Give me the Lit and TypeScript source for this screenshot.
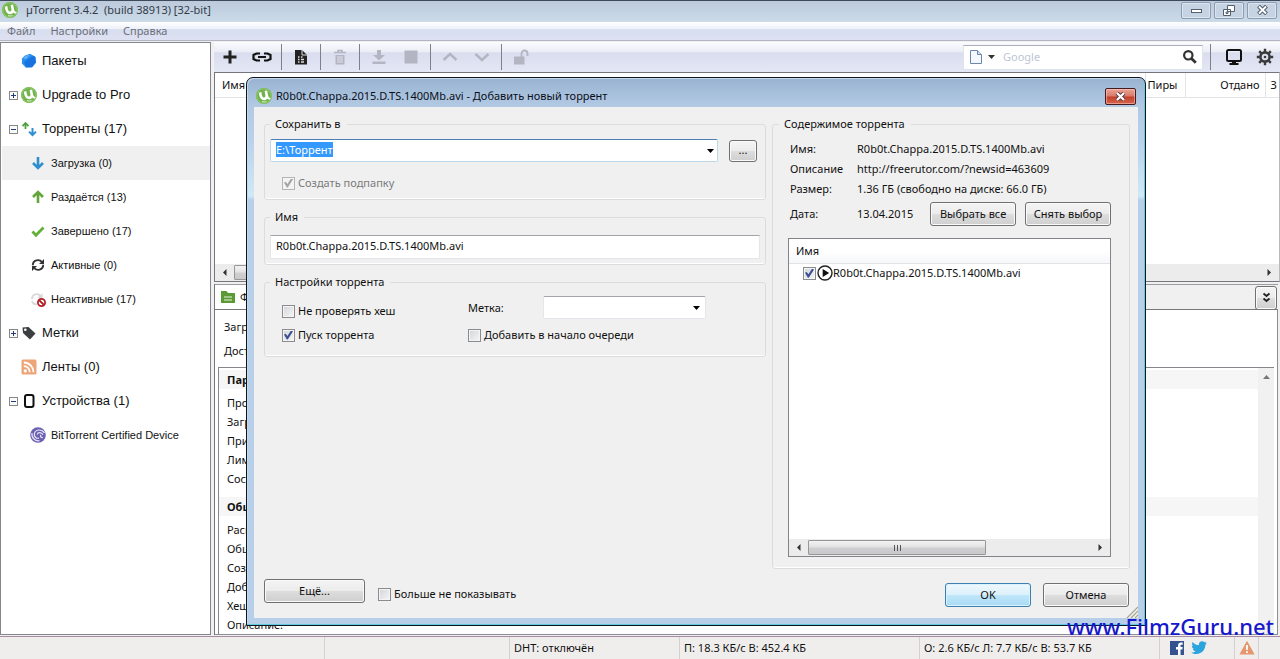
import { LitElement, html, css, svg, nothing } from "lit";
import { customElement, query } from "lit/decorators.js";
import { classMap } from "lit/directives/class-map.js";

const logo = svg`
  <circle cx="8" cy="8" r="8" fill="#72b34e"/>
  <circle cx="8" cy="8" r="7.2" fill="none" stroke="#8ecb68" stroke-width="1"/>
  <path d="M2.800 4.800l2.600-.9c.2 3.600 1 5.500 2.600 5.500 1.300 0 1.700-1 1.300-3l-.7-3.400 2.500-.6.9 4.700c.4 2.100 1 2.900 2.800 3.100-.6 1.500-2.700 1.600-3.600.3-.7 1.300-1.600 1.800-3.100 1.700-3.200-.1-4.800-2.900-5.300-7.400z" fill="#fff"/>
  <path d="M6 13.600c1.500.5 3.200.4 4.500-.1" stroke="#dff0d4" stroke-width="1" fill="none"/>`;

const icon = (body: unknown, w = 16, h = w) =>
  html`<svg class="ico" width=${w} height=${h} viewBox="0 0 ${w} ${h}" aria-hidden="true">${body}</svg>`;

const icons = {
  packets: svg`<path d="M4 2.500L9 .8l5 2.700 1.200 6L11 14.500l-6 .3L.9 10.500 1 5.500z" fill="#2a8df0"/><path d="M3 9l9-6 2.500 1 .2 5.500L11 14H5z" fill="#1872e0"/><path d="M2 5.500L4.500 3 9 1.500 5 6z" fill="#5cb4fb"/>`,
  torrents: svg`<path d="M4.500 8V2.500M1.500 5.200L4.500 2l3 3.200" fill="none" stroke="#4da23e" stroke-width="1.800"/><path d="M11.500 7v6.500M8 10.600l3.500 3.400 3.500-3.400" fill="none" stroke="#2f8fce" stroke-width="2"/>`,
  down: svg`<path d="M8 2v11M3 8l5 5 5-5" fill="none" stroke="#2f8fce" stroke-width="2.600"/>`,
  up: svg`<path d="M8 14V3M3 8l5-5 5 5" fill="none" stroke="#62a63a" stroke-width="2.600"/>`,
  done: svg`<path d="M2.500 8.500L6 12.200 13.500 4.500" fill="none" stroke="#62b03a" stroke-width="2.800"/>`,
  active: svg`<path d="M2.800 8.200c0-5.200 6.500-6.700 9.300-3M13.200 7.800c0 5.200-6.500 6.700-9.300 3" fill="none" stroke="#333" stroke-width="1.900"/><path d="M14 2v5H9zM2 14V9h5z" fill="#333"/>`,
  inactive: svg`<path d="M2 8c0-5 6-6.500 8.500-3M2 10c1 3 3 3.600 5 3" fill="none" stroke="#d9d9d9" stroke-width="1.800"/><path d="M12.500 2v5h-5z" fill="#d9d9d9"/><circle cx="11.500" cy="11.500" r="3.600" fill="#fff" stroke="#b3202a" stroke-width="1.800"/><path d="M9 9l5 5" stroke="#b3202a" stroke-width="1.800"/>`,
  labels: svg`<path d="M1.500 2.500l6-.6 7 6.600-5.500 6-7-6.500z" fill="#3b3f42"/><circle cx="4.300" cy="4.800" r="1.300" fill="#fff"/>`,
  feeds: svg`<rect x=".5" y=".5" width="15" height="15" rx="1.500" fill="#eda577"/><circle cx="4.300" cy="11.900" r="1.600" fill="#fff"/><path d="M2.800 7.200a6 6 0 0 1 6 6M2.800 3.500a9.700 9.700 0 0 1 9.700 9.700" fill="none" stroke="#fff" stroke-width="1.800"/>`,
  devices: svg`<rect x="4" y="2" width="8.500" height="12" rx="2" fill="none" stroke="#111" stroke-width="2"/>`,
  bt: svg`<circle cx="8" cy="8" r="7.800" fill="#6a62b0"/><path d="M14.500 6C12 2 6 2 4.500 6.200 3.500 9.500 6.500 12 9 11M13 7.800C11.500 5 8 5 7.200 7.500M12.800 10.500c-2 .3-3-1.800-1.800-2.500M2 6c-.8 5 3.500 8.500 7.500 7.700" fill="none" stroke="#e6e3f6" stroke-width="1.200"/>`,
  plus: svg`<path d="M8 1.500v13M1.500 8h13" stroke="#222" stroke-width="3"/>`,
  link: svg`<path d="M9 4.500H5.500l-3 1.500v4l3 1.500H9M13 4.500h3.500l3 1.500v4l-3 1.500H13M7 8h8" fill="none" stroke="#111" stroke-width="2.200"/>`,
  file: svg`<path d="M2 1h7l5 5v9.500H2z" fill="#222"/><path d="M9 1v5h5" fill="none" stroke="#ddd"/><path d="M5 8h1.500M8 8h1.500M5 10.500h1.500M5 13h1.500M8 10.500h3M8 13h3" stroke="#ddd" stroke-width="1.500"/>`,
  trash: svg`<path d="M2 3.500h12M6 3V1.500h4V3" fill="none" stroke="#b4b5c2" stroke-width="1.600"/><path d="M3.500 6h9v9.500h-9z" fill="#b4b5c2"/><path d="M6 7v7M8 7v7M10 7v7" stroke="#dfe1ee"/>`,
  get: svg`<path d="M6 1h4v5h4L8 11.500 2 6h4zM1.500 12.500h13v2.500h-13z" fill="#b4b5c2"/>`,
  stop: svg`<path d="M1.500 1.500h13v13h-13z" fill="#b4b5c2"/>`,
  chevUp: svg`<path d="M1.500 11L8 5l6.500 6" fill="none" stroke="#b4b5c2" stroke-width="2.400"/>`,
  chevDown: svg`<path d="M1.500 5L8 11l6.500-6" fill="none" stroke="#b4b5c2" stroke-width="2.400"/>`,
  lock: svg`<path d="M1 7.500h10.500v8H1z" fill="#b4b5c2"/><path d="M8.500 8V4.500a3 3 0 0 1 6 0V7" fill="none" stroke="#b4b5c2" stroke-width="1.800"/>`,
  page: svg`<path d="M2.500 1.500h7l4 4v9h-11z" fill="#f4f8fd" stroke="#6d87ac"/><path d="M9.500 1.500v4h4" fill="#cfdcee" stroke="#6d87ac"/>`,
  search: svg`<circle cx="6.300" cy="6.300" r="4.200" fill="none" stroke="#333" stroke-width="2.200"/><path d="M9.500 9.500l4.300 4.300" stroke="#333" stroke-width="2.800"/>`,
  monitor: svg`<rect x="2" y="2" width="14" height="11" rx="1.500" fill="none" stroke="#111" stroke-width="2"/><path d="M7 13h4v2h2.500v2h-9v-2H7z" fill="#111"/>`,
  gear: svg`<circle cx="9" cy="9" r="4.600" fill="none" stroke="#3a3a3a" stroke-width="2.600"/><circle cx="9" cy="9" r="1.300" fill="#3a3a3a"/><path d="M9 .8v3M9 14.200v3M.8 9h3M14.200 9h3M3.200 3.200l2.100 2.100M12.700 12.700l2.100 2.100M3.200 14.800l2.100-2.100M12.700 5.300l2.100-2.100" stroke="#3a3a3a" stroke-width="2.400"/>`,
  folder: svg`<path d="M0 1h5.500l1.500 2h7v10H0z" fill="#5b9a34"/><path d="M3 7h8M3 10h8" stroke="#e6f2dd" stroke-width="1.200"/>`,
  play: svg`<circle cx="8" cy="8" r="7" fill="#fff" stroke="#222" stroke-width="1.400"/><path d="M5.700 3.900L12.200 8l-6.500 4.100z" fill="#111"/>`,
  facebook: svg`<path d="M1 1h14v14H1z" fill="#35548f"/><path d="M9 15V9.500H7V7h2V5.500C9 3.500 10.200 2.500 12 2.500h1.700v2.300h-1.200c-.8 0-1 .4-1 1V7h2.200l-.3 2.500h-1.900V15z" fill="#fff"/>`,
  twitter: svg`<path d="M16 3.500l-1.600 1.300C14.300 10.500 10 14 5.500 14 3.500 14 1.600 13.500.2 12.500c1.700.1 3.200-.3 4.400-1.300-1.300-.1-2.400-1-2.900-2.200h1.400C1.700 8.600.8 7.300.8 5.800l1.400.4C1 5 .7 3.300 1.500 1.900c1.600 1.900 3.700 3 6.400 3.200C7.500 2.700 9.200 1.200 11 1.200c1 0 1.900.4 2.500 1.100l2-.8-1.200 1.800z" fill="#2ba3dd"/>`,
  warning: svg`<path d="M8 .8l7.600 13.700H.4z" fill="#e5966c"/><path d="M8 5v5M8 11.300v1.800" stroke="#fff" stroke-width="1.800"/>`,
};

interface NavItem { text: string; icon: unknown; sub?: boolean; expand?: "+" | "-"; active?: boolean }

const nav: NavItem[] = [
  { text: "Пакеты", icon: icons.packets },
  { text: "Upgrade to Pro", icon: logo, expand: "+" },
  { text: "Торренты (17)", icon: icons.torrents, expand: "-" },
  { text: "Загрузка (0)", icon: icons.down, sub: true, active: true },
  { text: "Раздаётся (13)", icon: icons.up, sub: true },
  { text: "Завершено (17)", icon: icons.done, sub: true },
  { text: "Активные (0)", icon: icons.active, sub: true },
  { text: "Неактивные (17)", icon: icons.inactive, sub: true },
  { text: "Метки", icon: icons.labels, expand: "+" },
  { text: "Ленты (0)", icon: icons.feeds },
  { text: "Устройства (1)", icon: icons.devices, expand: "-" },
  { text: "BitTorrent Certified Device", icon: icons.bt, sub: true },
];

const tools: ([string, unknown, number, boolean] | null)[] = [
  ["Добавить торрент", icons.plus, 16, false],
  ["Добавить по ссылке", icons.link, 22, false],
  null,
  ["Создать торрент", icons.file, 16, false],
  null,
  ["Удалить", icons.trash, 16, true],
  null,
  ["Запустить", icons.get, 16, true],
  ["Остановить", icons.stop, 16, true],
  null,
  ["Вверх", icons.chevUp, 16, true],
  ["Вниз", icons.chevDown, 16, true],
  null,
  ["Доступ", icons.lock, 16, true],
];

const details = [
  { title: "Параметры", rows: ["Прошло:", "Загружено:", "Приём:", "Лимит:", "Состояние:"] },
  { title: "Общие", rows: ["Расположение:", "Общий размер:", "Создан:", "Добавлен:", "Хеш:", "Описание:"] },
];

@customElement("scroll-row")
class ScrollRow extends LitElement {
  static styles = css`
    :host { display: flex; align-items: center; height: 17px; background: #ececec; }
    svg { flex: none; width: 19px; height: 7px; }
    .track { flex: 1; display: flex; height: 100%; }
    .thumb {
      display: flex; align-items: center; justify-content: center; gap: 2px;
      width: 63%; box-sizing: border-box; height: 15px; margin-top: 1px;
      border: 1px solid #979797; border-radius: 1px;
      background: linear-gradient(#f3f3f3, #e2e2e2 48%, #cfcfd1 52%, #c9c9cb);
    }
    .thumb i { width: 1px; height: 6px; background: #555; }
  `;
  render() {
    return html`
      <svg viewBox="0 0 19 7"><path d="M11.500 0v7L8 3.500z" fill="#333"/></svg>
      <div class="track"><div class="thumb"><i></i><i></i><i></i></div></div>
      <svg viewBox="0 0 19 7"><path d="M7.500 0v7L11 3.500z" fill="#333"/></svg>`;
  }
}

@customElement("app-root")
class AppRoot extends LitElement {
  @query("#path") path!: HTMLInputElement;

  static styles = css`
    :host {
      display: flex; flex-direction: column; position: relative;
      min-height: 100vh; box-sizing: border-box; overflow: hidden;
      font: 11px/16px "Noto Sans", "Open Sans", sans-serif; color: #111;
      background: #f0f0f0; border-bottom: 2px solid #0c1118;
    }
    *, *::before, *::after { box-sizing: border-box; }
    button, input, select { font: inherit; color: inherit; margin: 0; padding: 0; }
    button { cursor: default; }
    a { color: inherit; text-decoration: none; }
    .ico { display: block; flex: none; }
    table { border-collapse: collapse; table-layout: fixed; width: 100%; }
    th, td { font-weight: 400; text-align: left; padding: 0; white-space: nowrap; }

    .titlebar {
      display: flex; align-items: center; gap: 8px; height: 22px; padding: 0 3px 3px 2px;
      border-top: 1px solid #3d4a5c; color: #333b48;
      background: linear-gradient(#bccadb, #cbdbe9);
    }
    .titlebar .name { flex: 1; white-space: pre; padding: 0; }
    .winbtns { display: flex; gap: 3px; }
    .winbtn {
      display: grid; place-items: center; width: 30px; height: 17px;
      border: 1px solid #8d9cb0; border-radius: 2px; background: #c5d3e2;
      box-shadow: inset 0 0 0 1px #dbe5ef;
    }

    .menu {
      display: flex; gap: 15px; height: 19px; padding: 0 7px; align-items: center;
      border-bottom: 1px solid #b3b6c2; color: #6c6f78;
      background: linear-gradient(#fff, #eef1f9 38%, #d6def0 42%, #dfe1f2);
    }
    .menu button { border: 0; background: none; }

    .body { flex: 1; display: grid; grid-template-columns: 211px minmax(0, 1fr); gap: 3px; padding-top: 1px; }
    .sidebar {
      margin-bottom: 1px; padding: 1px 0;
      border: 1px solid #84868c; background: #fff;
      font-family: "Liberation Sans", Arial, sans-serif; font-size: 13px;
    }
    .sidebar ul { margin: 0; padding: 0; list-style: none; }
    .sidebar a { display: flex; align-items: center; height: 34px; padding-left: 8px; }
    .sidebar .expander { width: 12px; flex: none; }
    .sidebar .ico { margin-right: 5px; }
    .sidebar .sub { padding-left: 29px; font-size: 11px; }
    .sidebar .active { background: #f0f0f0; margin-left: 1px; padding-left: 28px; }

    .main { display: flex; flex-direction: column; min-width: 0; }
    .toolbar {
      display: flex; align-items: center; height: 30px;
      background: linear-gradient(#fafbfd, #eceef7 32%, #d9ddee 36%, #e4e7f5);
    }
    .tool { display: grid; place-items: center; width: 32px; height: 26px; border: 0; background: none; }
    .sep { width: 1px; height: 26px; margin: 0 3px; background: #7d7f8b; }
    .search {
      display: flex; align-items: center; width: 240px; height: 25px; margin-left: auto; padding: 0 4px;
      background: #fff; border: 1px solid #dfe3ea; border-top-color: #a9aebb;
    }
    .search input { flex: 1; min-width: 0; border: 0; outline: 0; background: none; padding-left: 4px; }
    .search input::placeholder { color: #bcc6d6; opacity: 1; }
    .search button { border: 0; background: none; display: grid; place-items: center; }
    .right-sep { margin: 0 7px; }
    .right-tool { width: 31px; }

    .torrents {
      display: flex; flex-direction: column; height: 210px; border: 1px solid #74767c;
      border-right-color: #b8babf; background: #fff;
    }
    .torrents th { height: 24px; border-bottom: 1px solid #e4e4e6; border-right: 1px solid #e2e4e8; overflow: hidden; }
    .torrents th:first-child { padding-left: 7px; }
    .torrents .peers { width: 40px; padding-left: 2px; }
    .torrents .sent { width: 80px; text-align: right; padding-right: 5px; }
    .torrents .more { width: 14px; padding-left: 5px; border-right: 0; }
    .torrents scroll-row { margin-top: auto; }

    .info { flex: 1; display: flex; flex-direction: column; margin: 2px 2px 1px 0; border-left: 1px solid #74767c; min-height: 0; }
    .tabs { display: flex; justify-content: space-between; height: 25px; border-top: 1px solid #9a9ca2; }
    .tab { display: flex; align-items: center; gap: 5px; width: 90px; padding: 0 6px; border: 0; background: #fff; }
    .collapse { display: grid; place-items: center; width: 22px; height: 21px; margin: 1px; }
    .panel { flex: 1; display: flex; flex-direction: column; border: 1px solid #8b8d93; border-left: 0; border-top-color: #777; background: #fff; }
    .summary { display: flex; flex-direction: column; gap: 8px; padding: 9px 9px 8px; }
    .facts { flex: 1; display: grid; grid-template-columns: minmax(0, 1fr) 16px; margin: 0 3px; border-top: 1px solid #85878d; border-left: 1px solid #85878d; }
    .facts dl { margin: 0; padding-top: 2px; }
    .facts dt { padding-left: 8px; height: 19px; line-height: 19px; }
    .facts .head { background: #f6f6f6; font-weight: 700; margin-bottom: 4px; }
    .facts dt + .head { margin-top: 9px; }
    .vscroll { background: #f1f1f1; display: flex; justify-content: center; padding-top: 7px; }

    .status {
      display: grid; height: 23px; border-top: 1px solid #a78ba3;
      grid-template-columns: 325fr 185fr 170fr 240fr 240fr 75px 24px 21px;
      background: #f0eeed;
    }
    .status > div { display: flex; align-items: center; padding-left: 4px; gap: 6px; border-right: 1px solid #d5d1d1; white-space: nowrap; }
    .status > div:last-child { border: 0; }
    .status .social { padding-left: 9px; }

    .dialog {
      position: absolute; inset: 77px 134px 32px 246px; z-index: 1;
      display: flex; flex-direction: column; padding: 0 7px 7px;
      border: 1px solid #10161e; border-radius: 7px 7px 1px 1px;
      box-shadow: inset -1px -1px 0 #62cbe0, inset 1px 1px 0 #c5d9ec;
      background: linear-gradient(#98b3d1, #b3cae4 29px, #b8d0ea 60px, #cfe9f7 118px, #b7cfe9 122px);
    }
    .caption { display: flex; align-items: center; gap: 4px; height: 29px; padding: 7px 2px 0 2px; color: #0a0f1a; }
    .caption span { flex: 1; white-space: nowrap; }
    .close {
      display: grid; place-items: center; width: 31px; height: 17px; border: 1px solid #451a20; border-radius: 2px;
      background: linear-gradient(#eaa394, #d9796a 48%, #c23f2c 52%, #d4664b);
      box-shadow: inset 0 0 0 1px rgba(255, 210, 200, .5);
    }
    .client { position: relative; flex: 1; display: flex; flex-direction: column; padding: 9px 8px 11px 10px; background: #f0f0f0; }
    .cols { flex: 1; display: grid; grid-template-columns: minmax(0, 502fr) minmax(0, 358fr); gap: 6px; }
    .left { display: flex; flex-direction: column; gap: 9px; }
    fieldset { margin: 0; padding: 0 5px; min-width: 0; border: 1px solid #dcdcdc; border-radius: 3px; box-shadow: inset 0 -1px 0 #fff; }
    legend { margin-left: 0; padding: 0 6px 0 5px; height: 16px; }

    .row { display: flex; align-items: center; }
    .field { height: 24px; width: 100%; padding: 0 5px 3px; border: 1px solid #e3e6ea; border-top-color: #a3a5ab; background: #fff; outline: 0; }
    .combo { display: grid; grid-template-columns: minmax(0, 1fr) 18px; align-items: center; height: 23px; border: 1px solid #bcd8ea; border-top-color: #4d7fb5; border-radius: 2px; background: #fff; }
    .combo input { grid-area: 1 / 1; height: 21px; border: 0; outline: 0; background: none; padding: 0 0 2px 5px; min-width: 0; }
    .combo input::selection { background: #3399ff; color: #fff; }
    .combo button { border: 0; background: none; display: grid; place-items: center; height: 100%; }
    .combo.plain { width: 163px; border-color: #e3e6ea; border-top-color: #a3a5ab; }
    .combo select { grid-area: 1 / 1 / 2 / 3; appearance: none; border: 0; outline: 0; background: none; width: 100%; height: 100%; }
    .combo .ico { grid-area: 1 / 2; justify-self: center; pointer-events: none; }
    .btn { height: 24px; padding-bottom: 1px; border: 1px solid #707070; border-radius: 3px; text-align: center; white-space: nowrap;
      background: linear-gradient(#f4f4f4, #ececec 48%, #dddddd 52%, #cfcfcf); box-shadow: inset 0 0 0 1px #fafafa; }
    .btn.default { border-color: #3c7fb1; background: linear-gradient(#eef8fd, #dcf1fb 48%, #bfe6fa 52%, #a9dbf5); box-shadow: inset 0 0 0 1px #d9f2fc; }
    label.check { display: flex; align-items: center; gap: 3px; white-space: nowrap; }
    input[type="checkbox"] {
      appearance: none; width: 13px; height: 13px; flex: none; border: 1px solid #8a8c90;
      background: linear-gradient(135deg, #d2d5d9, #f6f6f6); box-shadow: inset 0 0 0 1px #f4f4f4;
      display: grid; place-items: center;
    }
    input[type="checkbox"]:checked::before {
      content: ""; width: 9px; height: 9px; background: #3b4f92;
      clip-path: polygon(0 45%, 18% 35%, 38% 62%, 78% 0, 100% 8%, 42% 100%, 32% 100%);
    }
    input[type="checkbox"]:disabled { border-color: #b5b5b5; background: #f3f3f3; }
    input[type="checkbox"]:disabled:checked::before { background: #a5a5a8; }
    .muted { color: #7b7b7b; }

    .save { padding: 7px 2px 8px 0; display: flex; flex-direction: column; gap: 13px; }
    .save .row { gap: 11px; }
    .save .combo { flex: 1; }
    .browse { width: 28px; height: 22px; }
    .save .check { padding-left: 12px; }
    .save { padding-right: 3px; }
    .name { padding: 10px 0 5px; }
    .options { display: grid; grid-template-columns: 186px minmax(0, 1fr); row-gap: 8px; align-items: end; padding: 6px 0 13px 12px; }
    .options .tag { width: 75px; }

    .right { padding: 0 18px 11px 15px; display: flex; }
    .right legend { margin-left: -9px; }
    .right-in { display: flex; flex-direction: column; height: 100%; padding-top: 7px; }
    .meta { display: grid; grid-template-columns: 67px minmax(0, 1fr); grid-auto-rows: 20px; margin: 0 0 0 2px; }
    .meta dt, .meta dd { margin: 0; line-height: 20px; white-space: nowrap; overflow: hidden; }
    .date { display: flex; align-items: center; margin: 3px 0 12px 2px; }
    .date span:first-child { width: 67px; }
    .date .value { flex: 1; }
    .date .btn { width: 86px; }
    .date .btn + .btn { margin-left: 9px; }
    .files { flex: 1; display: flex; flex-direction: column; border: 1px solid #82848a; background: #fff; }
    .files th { height: 24px; padding-left: 7px; border-bottom: 1px solid #e3e3e5; background: linear-gradient(#fff 50%, #f6f7f9); }
    .files td { height: 20px; padding-left: 14px; }
    .files label { display: flex; align-items: center; }
    .files label .ico { margin-left: 1px; }
    .files scroll-row { margin-top: auto; }

    .footer { display: flex; height: 28px; margin-top: 10px; }
    .footer .more-btn { width: 101px; margin-right: 13px; }
    .footer .check { align-self: flex-end; height: 26px; }
    .footer .push { margin-left: auto; }
    .footer .ok { width: 86px; align-self: flex-end; }
    .footer .ok + .ok { margin-left: 12px; margin-right: 1px; }
    .grip { position: absolute; right: 0; bottom: 0; }

    .watermark {
      position: absolute; right: 6px; bottom: 15px; z-index: 2; color: #1717cc;
      font: 500 22px/30px "Noto Sans", "Open Sans", sans-serif;
    }
    .dialog { bottom: 33px; }
    .watermark { bottom: 18px; }
  `;

  firstUpdated() {
    this.path.focus();
    this.path.select();
  }

  private expander(kind?: "+" | "-") {
    return html`<span class="expander">${kind
      ? icon(svg`<rect x=".5" y=".5" width="8" height="8" fill="#fafafa" stroke="#888"/><path d="${kind === "+" ? "M4.500 2v5" : ""}M2 4.500h5" stroke="#223a78"/>`, 9)
      : nothing}</span>`;
  }

  private arrow() {
    return icon(svg`<path d="M0 0h7L3.500 4z" fill="#000"/>`, 7, 4);
  }

  render() {
    return html`
      <header class="titlebar">
        ${icon(logo)}
        <span class="name">µTorrent 3.4.2  (build 38913) [32-bit]</span>
        <div class="winbtns">
          <button class="winbtn" aria-label="Свернуть">${icon(svg`<rect x=".5" y="4.500" width="10" height="3" fill="#fff" stroke="#56616f"/>`, 11, 10)}</button>
          <button class="winbtn" aria-label="Развернуть">${icon(svg`<path d="M4.500.5h7v6h-7zM.5 4.500h7v6h-7z" fill="#fff" stroke="#56616f"/><path d="M3 7h2v1.500H3z" fill="#fff" stroke="#56616f"/>`, 12, 11)}</button>
          <button class="winbtn" aria-label="Закрыть">${icon(svg`<path d="M1.500 1l8 8M9.500 1l-8 8" stroke="#56616f" stroke-width="4"/><path d="M2 1.500l7 7M9 1.500l-7 7" stroke="#fff" stroke-width="1.800"/>`, 11, 10)}</button>
        </div>
      </header>
      <nav class="menu"><button>Файл</button><button>Настройки</button><button>Справка</button></nav>

      <div class="body">
        <nav class="sidebar"><ul>
          ${nav.map((n) => html`<li><a href="#" class=${classMap({ sub: !!n.sub, active: !!n.active })}>
            ${n.sub ? nothing : this.expander(n.expand)}${icon(n.icon)}${n.text}</a></li>`)}
        </ul></nav>

        <main class="main">
          <div class="toolbar">
            ${tools.map((t) => t
              ? html`<button class="tool" aria-label=${t[0]} ?disabled=${t[3]}>${icon(t[1], t[2], 16)}</button>`
              : html`<span class="sep"></span>`)}
            <div class="search">
              ${icon(icons.page)}
              <button aria-label="Поисковик">${icon(svg`<path d="M4 0h7L7.500 4z" fill="#333"/>`, 15, 4)}</button>
              <input type="text" placeholder="Google" aria-label="Поиск">
              <button aria-label="Найти">${icon(icons.search)}</button>
            </div>
            <span class="sep right-sep"></span>
            <button class="tool right-tool" aria-label="Устройства">${icon(icons.monitor, 18)}</button>
            <button class="tool right-tool" aria-label="Настройки">${icon(icons.gear, 18)}</button>
          </div>

          <section class="torrents">
            <table><thead><tr><th>Имя</th><th class="peers">Пиры</th><th class="sent">Отдано</th><th class="more">З</th></tr></thead></table>
            <scroll-row></scroll-row>
          </section>

          <section class="info">
            <div class="tabs">
              <button class="tab">${icon(icons.folder, 14)}Файлы</button>
              <button class="btn collapse" aria-label="Свернуть панель">${icon(svg`<path d="M1.500 1.500l3 2.500 3-2.500M1.500 6.500l3 2.500 3-2.500" fill="none" stroke="#222" stroke-width="1.800"/>`, 9, 11)}</button>
            </div>
            <div class="panel">
              <div class="summary"><span>Загружено:</span><span>Доступно:</span></div>
              <div class="facts">
                <dl>${details.map((g) => html`<dt class="head">${g.title}</dt>${g.rows.map((r) => html`<dt>${r}</dt>`)}`)}</dl>
                <div class="vscroll">${icon(svg`<path d="M0 4L3.500 0 7 4z" fill="#777"/>`, 7, 4)}</div>
              </div>
            </div>
          </section>
        </main>
      </div>

      <footer class="status">
        <div></div><div></div>
        <div>DHT: отключён</div>
        <div>П: 18.3 КБ/с В: 452.4 КБ</div>
        <div>О: 2.6 КБ/с Л: 7.7 КБ/с В: 53.7 КБ</div>
        <div class="social">${icon(icons.facebook)}${icon(icons.twitter)}</div>
        <div>${icon(icons.warning)}</div>
        <div></div>
      </footer>

      <section class="dialog" role="dialog" aria-labelledby="caption">
        <div class="caption">
          ${icon(logo)}
          <span id="caption">R0b0t.Chappa.2015.D.TS.1400Mb.avi - Добавить новый торрент</span>
          <button class="close" aria-label="Закрыть">${icon(svg`<path d="M2 1l7 7M9 1L2 8" stroke="#5b3a40" stroke-width="4"/><path d="M2 1l7 7M9 1L2 8" stroke="#fff" stroke-width="2.200"/>`, 11, 9)}</button>
        </div>
        <div class="client">
          <div class="cols">
            <div class="left">
              <fieldset>
                <legend><label for="path">Сохранить в</label></legend>
                <div class="save">
                  <div class="row">
                    <div class="combo">
                      <input id="path" type="text" value="E:\\Торрент">
                      <button aria-label="Список папок">${this.arrow()}</button>
                    </div>
                    <button class="btn browse">...</button>
                  </div>
                  <label class="check muted"><input type="checkbox" checked disabled>Создать подпапку</label>
                </div>
              </fieldset>
              <fieldset>
                <legend><label for="name">Имя</label></legend>
                <div class="name row"><input class="field" id="name" type="text" value="R0b0t.Chappa.2015.D.TS.1400Mb.avi"></div>
              </fieldset>
              <fieldset>
                <legend>Настройки торрента</legend>
                <div class="options">
                  <label class="check"><input type="checkbox">Не проверять хеш</label>
                  <div class="row">
                    <label class="tag" for="tag">Метка:</label>
                    <div class="combo plain"><select id="tag"><option></option></select>${this.arrow()}</div>
                  </div>
                  <label class="check"><input type="checkbox" checked>Пуск торрента</label>
                  <label class="check"><input type="checkbox">Добавить в начало очереди</label>
                </div>
              </fieldset>
            </div>

            <fieldset class="right">
              <legend>Содержимое торрента</legend>
              <div class="right-in">
                <dl class="meta">
                  <dt>Имя:</dt><dd>R0b0t.Chappa.2015.D.TS.1400Mb.avi</dd>
                  <dt>Описание</dt><dd>http://freerutor.com/?newsid=463609</dd>
                  <dt>Размер:</dt><dd>1.36 ГБ (свободно на диске: 66.0 ГБ)</dd>
                </dl>
                <div class="date">
                  <span>Дата:</span><span class="value">13.04.2015</span>
                  <button class="btn">Выбрать все</button><button class="btn">Снять выбор</button>
                </div>
                <div class="files">
                  <table>
                    <thead><tr><th>Имя</th></tr></thead>
                    <tbody><tr><td><label><input type="checkbox" checked>${icon(icons.play)}R0b0t.Chappa.2015.D.TS.1400Mb.avi</label></td></tr></tbody>
                  </table>
                  <scroll-row></scroll-row>
                </div>
              </div>
            </fieldset>
          </div>

          <div class="footer">
            <button class="btn more-btn">Ещё...</button>
            <label class="check"><input type="checkbox">Больше не показывать</label>
            <button class="btn default ok push">OK</button>
            <button class="btn ok">Отмена</button>
          </div>
          <svg class="grip" width="12" height="12" viewBox="0 0 12 12" aria-hidden="true"><path d="M1 12L12 1M5 12l7-7M9 12l3-3" stroke="#a5a58f" stroke-width="1.200"/></svg>
        </div>
      </section>

      <div class="watermark">www.FilmzGuru.net</div>
    `;
  }
}
